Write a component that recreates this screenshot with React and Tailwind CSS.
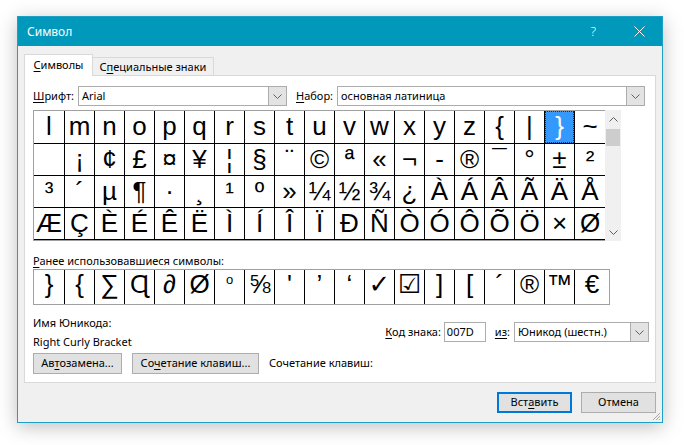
import React from 'react';

const gridRows = [
  ['l', 'm', 'n', 'o', 'p', 'q', 'r', 's', 't', 'u', 'v', 'w', 'x', 'y', 'z', '{', '|', '}', '~'],
  ['\u00a0', '¡', '¢', '£', '¤', '¥', '¦', '§', '¨', '©', 'ª', '«', '¬', '-', '®', '¯', '°', '±', '²'],
  ['³', '´', 'µ', '¶', '·', '¸', '¹', 'º', '»', '¼', '½', '¾', '¿', 'À', 'Á', 'Â', 'Ã', 'Ä', 'Å'],
  ['Æ', 'Ç', 'È', 'É', 'Ê', 'Ë', 'Ì', 'Í', 'Î', 'Ï', 'Ð', 'Ñ', 'Ò', 'Ó', 'Ô', 'Õ', 'Ö', '×', 'Ø'],
];

const rowClasses = ['h-[33px]', 'h-[32px]', 'h-[32px]', 'h-[32px]'];

const recent = ['}', '{', '∑', 'Ɋ', '∂', 'Ø', 'o', '⅝', "'", '’', '‘', '✓', '☑', ']', '[', '´', '®', '™', '€'];

function Chevron({ className = '' }) {
  return (
    <svg width="9" height="5" viewBox="0 0 9 5" className={className}>
      <path d="M0.5 0.5 L4.5 4.5 L8.5 0.5" fill="none" stroke="#606060" strokeWidth="1" />
    </svg>
  );
}

function Combo({ value, className = '' }) {
  return (
    <div className={`flex h-[20px] border border-[#acacac] bg-white ${className}`}>
      <div className="flex-1 truncate pl-[3px] leading-[18px] text-black">{value}</div>
      <div className="flex w-[18px] items-center justify-center border-l border-[#acacac] bg-[#e3e3e3]">
        <Chevron />
      </div>
    </div>
  );
}

function Key({ children }) {
  return <span className="underline underline-offset-[2px]">{children}</span>;
}

function cellWidth(i, last) {
  if (i === 0) return 'w-[31px] border-r border-black';
  if (i === 18) return last;
  return 'w-[30px] border-r border-black';
}

function RecentGlyph({ ch }) {
  if (ch === 'o') return <span className="relative -top-[5px] text-[13px]">o</span>;
  if (ch === '✓' || ch === '☑') return <span className="font-bold">{ch}</span>;
  return ch;
}

export default function App() {
  return (
    <div className="h-[445px] w-[684px] overflow-hidden bg-white pl-[17px] pt-[16px] font-['Noto_Sans',sans-serif] text-[11px] text-black">
      <div className="relative flex h-[407px] w-[646px] flex-col border border-[#1ea0c6] bg-[#f0f0f0] shadow-[0_4px_18px_rgba(0,0,0,0.25)]">
        {/* title bar */}
        <div className="flex h-[29px] items-center bg-[#0099bc] pl-[9px] text-[12px] text-white">
          <span>Символ</span>
          <span className="ml-auto mr-[38px] text-[13px] font-light">?</span>
          <svg width="11" height="11" viewBox="0 0 11 11" className="mr-[17px]">
            <path d="M0.5 0.5 L10.5 10.5 M10.5 0.5 L0.5 10.5" stroke="white" strokeWidth="1" />
          </svg>
        </div>

        <div className="flex flex-1 flex-col px-[6px]">
          {/* tabs */}
          <div className="mt-[8px] flex h-[21px] items-end">
            <div className="z-10 -mb-px flex h-[22px] w-[69px] items-center justify-center border border-b-0 border-[#d9d9d9] bg-white pb-[1px]">
              <span><Key>С</Key>имволы</span>
            </div>
            <div className="flex h-[18px] w-[121px] items-center justify-center border border-b-0 border-l-0 border-[#d9d9d9] bg-[#f0f0f0] pt-[1px]">
              <span>С<Key>п</Key>ециальные знаки</span>
            </div>
          </div>

          {/* pane */}
          <div className="flex h-[308px] w-full flex-col border border-[#d9d9d9] bg-white px-[8px]">
            <div className="mt-[10px] flex items-center">
              <span className="w-[45px]"><Key>Ш</Key>рифт:</span>
              <Combo value="Arial" className="w-[209px]" />
              <span className="ml-[9px] w-[41px]"><Key>Н</Key>абор:</span>
              <Combo value="основная латиница" className="w-[308px]" />
            </div>

            {/* symbol grid */}
            <div className="mt-[4px] flex">
              <div className="border-b border-l border-t border-[#a0a0a0] font-['Liberation_Sans',Arial,'DejaVu_Sans',sans-serif] text-[26px]">
                {gridRows.map((row, r) => (
                  <div key={r} className={`flex border-b border-black ${rowClasses[r]}`}>
                    {row.map((ch, i) => {
                      const selected = r === 0 && i === 17;
                      return (
                        <div key={i} className={`h-full ${cellWidth(i, 'w-[30px]')}`}>
                          <div
                            className={
                              selected
                                ? 'flex h-full justify-center border border-dotted border-[#3a2a10] bg-[#3399ff] leading-[28px] text-white'
                                : 'flex h-full justify-center leading-[30px]'
                            }
                          >
                            {ch}
                          </div>
                        </div>
                      );
                    })}
                  </div>
                ))}
              </div>
              {/* scrollbar */}
              <div className="flex h-[131px] w-[16px] flex-col items-center bg-[#f0f0f0]">
                <Chevron className="mt-[7px] rotate-180" />
                <div className="mt-[7px] h-[17px] w-[14px] bg-[#cdcdcd]" />
                <Chevron className="mb-[6px] mt-auto" />
              </div>
            </div>

            <div className="mt-[12px] h-[15px] leading-[15px]"><Key>Р</Key>анее использовавшиеся символы:</div>
            <div className="mt-[1px] flex h-[36px] w-[577px] border border-[#a0a0a0] font-['Liberation_Sans',Arial,'DejaVu_Sans',sans-serif] text-[26px]">
              {recent.map((ch, i) => (
                <div key={i} className={`flex h-full justify-center leading-[29px] ${cellWidth(i, 'w-[34px]')}`}>
                  <RecentGlyph ch={ch} />
                </div>
              ))}
            </div>

            <div className="flex">
              <div className="flex flex-col">
                <div className="mt-[10px] h-[15px] leading-[15px]">Имя Юникода:</div>
                <div className="mt-[4px] h-[15px] leading-[15px]">Right Curly Bracket</div>
                <div className="mt-[4px] flex h-[21px] items-center">
                  <div className="flex h-[21px] w-[89px] items-center justify-center border border-[#adadad] bg-[#e1e1e1]">
                    <span>Ав<Key>т</Key>озамена...</span>
                  </div>
                  <div className="ml-[10px] flex h-[21px] w-[127px] items-center justify-center border border-[#adadad] bg-[#e1e1e1]">
                    <span>Со<Key>ч</Key>етание клавиш...</span>
                  </div>
                  <span className="ml-[10px]">Сочетание клавиш:</span>
                </div>
              </div>
              <div className="-mr-[2px] ml-auto mt-[17px] flex h-[20px] items-center">
                <span><Key>К</Key>од знака:</span>
                <div className="ml-[3px] h-[20px] w-[42px] border border-[#acacac] bg-white pl-[2px] leading-[18px]">007D</div>
                <span className="ml-[9px]"><Key>из</Key>:</span>
                <Combo value="Юникод (шестн.)" className="ml-[4px] w-[135px]" />
              </div>
            </div>
          </div>

          {/* dialog buttons */}
          <div className="mt-[9px] flex justify-end">
            <div className="flex h-[21px] w-[75px] items-center justify-center border-2 border-[#0078d7] bg-[#e1e1e1]">
              <span>Вст<Key>а</Key>вить</span>
            </div>
            <div className="ml-[9px] flex h-[21px] w-[75px] items-center justify-center border border-[#adadad] bg-[#e1e1e1]">
              <span>Отмена</span>
            </div>
          </div>
        </div>

        <svg width="10" height="10" viewBox="0 0 10 10" className="absolute bottom-[1px] right-[1px]">
          <path d="M9 2 L2 9 M9 5 L5 9 M9 8 L8 9" stroke="#a8a8a8" strokeWidth="1" />
        </svg>
      </div>
    </div>
  );
}
